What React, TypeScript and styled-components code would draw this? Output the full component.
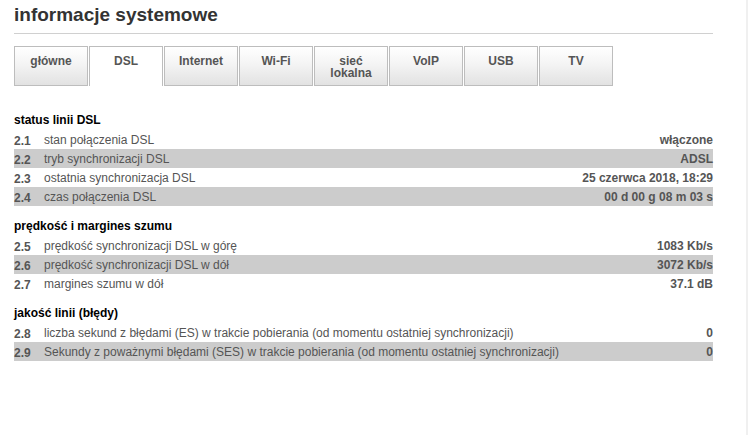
import React from "react";
import styled, { createGlobalStyle } from "styled-components";

const GlobalStyle = createGlobalStyle`
    html, body {
        margin: 0;
        padding: 0;
        background: #fff;
    }

    body {
        font-family: "Liberation Sans", Arial, sans-serif;
        font-size: 12px;
    }
`;

const Page = styled.div`
    width: 746px;
    min-height: 100vh;
    border-right: 2px solid #f0f0f0;
`;

const Content = styled.div`
    width: 699px;
    padding: 0 0 0 14px;
`;

const Title = styled.h1`
    margin: 0;
    padding-top: 3px;
    font-size: 19px;
    line-height: 23px;
    font-weight: bold;
    color: #333;
    border-bottom: 1px solid #d0d0d0;
    padding-bottom: 7px;
`;

const Tabs = styled.div`
    display: flex;
    gap: 1px;
    margin-top: 12px;
`;

const Tab = styled.div<{ $active?: boolean }>`
    box-sizing: border-box;
    width: 74px;
    height: 40px;
    padding-top: 8px;
    border: 1px solid #bdbdbd;
    border-bottom: ${(p) => (p.$active ? "none" : "1px solid #bdbdbd")};
    background: ${(p) =>
        p.$active ? "#fff" : "linear-gradient(to bottom, #ffffff 0%, #f4f4f4 45%, #e2e2e2 100%)"};
    color: #555;
    font-weight: bold;
    font-size: 12px;
    line-height: 12px;
    text-align: center;
`;

const Section = styled.div`
    margin-top: 10px;
`;

const FirstSection = styled(Section)`
    margin-top: 24px;
`;

const SectionTitle = styled.h2`
    margin: 0;
    font-size: 12px;
    line-height: 20px;
    font-weight: bold;
    color: #000;
`;

const Row = styled.div<{ $shaded?: boolean }>`
    display: flex;
    align-items: center;
    height: 19px;
    background: ${(p) => (p.$shaded ? "#cccccc" : "transparent")};
    color: #555;
`;

const Num = styled.span`
    width: 30px;
    font-weight: bold;
    font-size: 12px;
    padding-top: 2px;
`;

const Label = styled.span`
    flex: 1;
`;

const Value = styled.span`
    font-weight: bold;
    text-align: right;
`;

const tabs = ["główne", "DSL", "Internet", "Wi-Fi", "sieć\nlokalna", "VoIP", "USB", "TV"];

type Item = [string, string, string];

const sections: { title: string; rows: Item[] }[] = [
    {
        title: "status linii DSL",
        rows: [
            ["2.1", "stan połączenia DSL", "włączone"],
            ["2.2", "tryb synchronizacji DSL", "ADSL"],
            ["2.3", "ostatnia synchronizacja DSL", "25 czerwca 2018, 18:29"],
            ["2.4", "czas połączenia DSL", "00 d 00 g 08 m 03 s"],
        ],
    },
    {
        title: "prędkość i margines szumu",
        rows: [
            ["2.5", "prędkość synchronizacji DSL w górę", "1083 Kb/s"],
            ["2.6", "prędkość synchronizacji DSL w dół", "3072 Kb/s"],
            ["2.7", "margines szumu w dół", "37.1 dB"],
        ],
    },
    {
        title: "jakość linii (błędy)",
        rows: [
            ["2.8", "liczba sekund z błędami (ES) w trakcie pobierania (od momentu ostatniej synchronizacji)", "0"],
            ["2.9", "Sekundy z poważnymi błędami (SES) w trakcie pobierania (od momentu ostatniej synchronizacji)", "0"],
        ],
    },
];

const App: React.FC = () => {
    return (
        <Page>
            <GlobalStyle />
            <Content>
                <Title>informacje systemowe</Title>

                <Tabs>
                    {tabs.map((t) => (
                        <Tab key={t} $active={t === "DSL"}>
                            {t.split("\n").map((line) => (
                                <div key={line}>{line}</div>
                            ))}
                        </Tab>
                    ))}
                </Tabs>

                {sections.map((s, i) => {
                    const Wrap = i === 0 ? FirstSection : Section;
                    return (
                        <Wrap key={s.title}>
                            <SectionTitle>{s.title}</SectionTitle>
                            {s.rows.map(([n, label, value], j) => (
                                <Row key={n} $shaded={j % 2 === 1}>
                                    <Num>{n}</Num>
                                    <Label>{label}</Label>
                                    <Value>{value}</Value>
                                </Row>
                            ))}
                        </Wrap>
                    );
                })}
            </Content>
        </Page>
    );
};

export default App;
